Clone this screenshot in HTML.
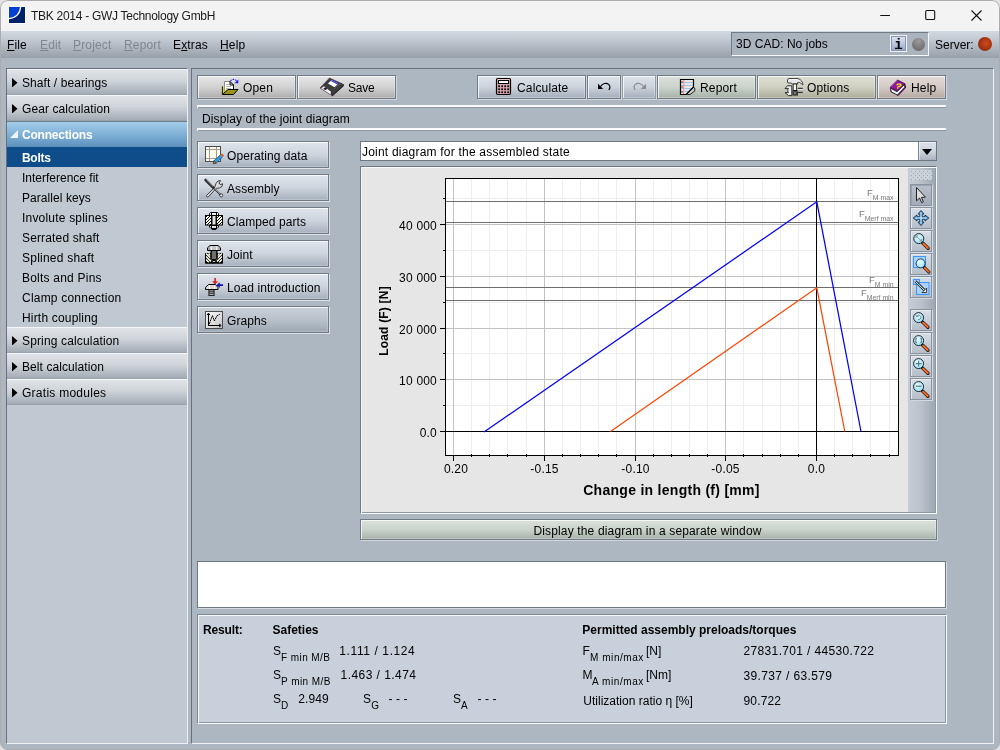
<!DOCTYPE html>
<html>
<head>
<meta charset="utf-8">
<title>TBK 2014 - GWJ Technology GmbH</title>
<style>
html,body{margin:0;padding:0;}
body{width:1000px;height:750px;overflow:hidden;background:#e2e2e2;font-family:"Liberation Sans",sans-serif;font-size:12px;color:#000;position:relative;}
.abs{position:absolute;}
#win{position:absolute;left:0;top:0;width:1000px;height:750px;border-radius:8px;background:#adb7c2;overflow:hidden;}
#winb{position:absolute;left:0;top:0;width:1000px;height:750px;border:1px solid #adadad;border-radius:8px;z-index:50;pointer-events:none;}
#win *{box-sizing:border-box;}
#win{will-change:transform;}
#title{position:absolute;left:0;top:0;width:1000px;height:31px;background:#f3f3f3;}
#title .t{position:absolute;left:31px;top:8px;font-size:12px;line-height:16px;color:#1a1a1a;white-space:nowrap;letter-spacing:-0.28px;}
#menubar{position:absolute;left:0;top:31px;width:1000px;height:27px;background:linear-gradient(#d3d9e0,#c3cad3 30%,#adb5bf 65%,#979fa9);}
.menu{position:absolute;top:6px;font-size:12px;letter-spacing:0.15px;line-height:16px;white-space:nowrap;}
.menu u{text-decoration:underline;text-underline-offset:1px;}
.menu.dis{color:#7f8790;}
/* sidebar */
#side{position:absolute;left:6px;top:68px;width:182px;height:676px;background:#c0c8d1;border-left:1px solid #66717d;border-top:1px solid #66717d;border-right:1px solid #eef1f4;border-bottom:1px solid #eef1f4;}
.hdr{position:absolute;left:0;width:180px;height:26px;background:linear-gradient(#dfe3e7,#cfd4da 45%,#a3abb5);border-top:1px solid #f4f6f8;border-bottom:1px solid #9ba4ae;font-size:12px;line-height:26px;padding-left:15px;white-space:nowrap;letter-spacing:0.08px;}
.hdr.sel{background:linear-gradient(#a5cde9,#7fb0d6 50%,#5c90bc);border-top:1px solid #6a808c;border-bottom:0;color:#fff;font-weight:bold;letter-spacing:-0.2px;}
.tri{position:absolute;left:5px;top:8px;width:5.5px;height:9.4px;background:#000;clip-path:polygon(0 0,100% 50%,0 100%);}
.tri2{position:absolute;left:3px;top:8px;width:0;height:0;border-bottom:8px solid #eef4fa;border-left:8px solid transparent;}
.it{position:absolute;left:0;width:180px;height:20px;font-size:12px;line-height:22px;padding-left:15px;white-space:nowrap;letter-spacing:0.06px;}
.it.sel{background:#0f4c8a;color:#fff;font-weight:bold;letter-spacing:-0.3px;}
/* main panel */
#main{position:absolute;left:191px;top:68px;width:803px;height:676px;background:#adb7c2;border-left:1px solid #66717d;border-top:1px solid #66717d;border-right:1px solid #eef1f4;border-bottom:1px solid #eef1f4;}
.btn{position:absolute;height:24px;border:1px solid #717b86;box-shadow:inset 1px 1px 0 rgba(255,255,255,.75),inset -1px -1px 0 rgba(255,255,255,.25),1px 1px 0 rgba(255,255,255,.45);font-size:12px;line-height:22px;white-space:nowrap;letter-spacing:0.15px;}
.g-gray{background:linear-gradient(#e6e6e6,#d2d2d2 50%,#adadad);}
.g-blue{background:linear-gradient(#dde3ea,#cbd3dc 50%,#a3afbc);}
.g-green{background:linear-gradient(#dbe1db,#cbd3cc 50%,#a6b2a8);}
.g-yel{background:linear-gradient(#dedfd3,#d0d1c2 50%,#abac99);}
.g-pink{background:linear-gradient(#e3dcd8,#d4cac5 50%,#b6a9a3);}
.btn.dis{border-color:#939da8;}
.btn span{position:absolute;top:1px;}
.sep{position:absolute;left:197px;width:749px;height:3px;border-left:1px solid #fafbfc;background:linear-gradient(#fafbfc,#fafbfc 2px,#8e98a3 2px);}
.sb{position:absolute;left:197px;width:132px;height:27px;border:1px solid #717b86;box-shadow:inset 1px 1px 0 rgba(255,255,255,.75),inset -1px -1px 0 rgba(255,255,255,.2),1px 1px 0 rgba(255,255,255,.6);background:linear-gradient(#e0e5ec,#cdd4dd 50%,#a6b1be);font-size:12px;line-height:25px;white-space:nowrap;letter-spacing:0.15px;}
.sb span{position:absolute;left:29px;top:2px;letter-spacing:0.08px;}
#combo{position:absolute;left:360px;top:141px;width:577px;height:20px;background:#fff;border:1px solid #6e7884;font-size:12px;line-height:18px;letter-spacing:0.21px;white-space:nowrap;}
#combo span{position:absolute;left:1px;top:1px;}
#combo i{position:absolute;right:0;top:0;width:18px;height:18px;background:linear-gradient(#dee3ea,#cdd4dc 50%,#a8b2be);border-left:1px solid #7a848f;box-shadow:inset 1px 1px 0 rgba(255,255,255,.5);}
#combo i:after{content:"";position:absolute;left:3px;top:7px;border-top:6px solid #000;border-left:5px solid transparent;border-right:5px solid transparent;}
#chart{position:absolute;left:360px;top:166px;width:577px;height:348px;background:#e6e6e6;border:1px solid #6e7884;border-right-color:#f8f9fa;border-bottom-color:#f8f9fa;box-shadow:inset 1px 1px 0 #f8f9fa,inset -1px -1px 0 #8e98a3;}
#ctb{position:absolute;left:908px;top:168px;width:27px;height:344px;background:linear-gradient(90deg,#c6cdd5,#b9c1ca 50%,#9da8b4);}
#sepwin{left:360px;top:519px;width:577px;height:21px;line-height:19px;text-align:center;}
#sepwin span{position:relative;top:2px;left:-1px;}
#msg{position:absolute;left:197px;top:561px;width:749px;height:47px;background:#fff;border:1px solid #6e7884;box-shadow:1px 1px 0 rgba(255,255,255,.5);}
#res{position:absolute;left:197px;top:614px;width:750px;height:110px;background:#c8d1db;border:1px solid #7d8793;border-right-color:#f8f9fa;border-bottom-color:#f8f9fa;box-shadow:inset 1px 1px 0 #f8f9fa,inset -1px -1px 0 #8e98a3;}
#cad{position:absolute;left:731px;top:1px;width:198px;height:24px;background:#aab4bf;border:1px solid #717b86;border-right-color:#f6f7f9;border-bottom-color:#f6f7f9;font-size:12px;line-height:16px;letter-spacing:0.15px;white-space:nowrap;}
#cad span{position:absolute;left:4px;top:3px;letter-spacing:0.03px;}
#cad b{position:absolute;left:158px;top:2px;width:17px;height:17px;padding-top:2px;border:1px solid #eef1f5;box-shadow:inset 0 0 0 1px #8a96ac;background:linear-gradient(#dfe6f4,#b3c1dc 60%,#8fa2c6);font-family:"Liberation Mono","DejaVu Sans Mono",monospace;font-weight:bold;font-size:14px;line-height:14px;text-align:center;color:#000;}
#cad em{position:absolute;left:180px;top:5px;width:13px;height:13px;border-radius:50%;background:radial-gradient(circle at 50% 25%,#9a9a9a,#727272 70%,#666);}
#srv{position:absolute;left:978px;top:6px;width:14px;height:14px;border-radius:50%;background:radial-gradient(circle at 58% 45%,#cf4a1c 0,#aa3613 45%,#882b10 80%,#742610);}
</style>
</head>
<body>
<div id="win">
  <div id="title">
    <svg class="abs" style="left:8px;top:6px" width="18" height="18" viewBox="-1 -1 18 18"><rect x="-1" y="-1" width="18" height="18" fill="#fdfdfd"/><rect width="16" height="16" fill="#00206c"/><path d="M0 0H11C10.6 6.2 6.2 10.6 0 11Z" fill="#0040d2"/><path d="M11.6 0C11.2 6.6 6.6 11.2 0 11.6" fill="none" stroke="#fff" stroke-width="1.3"/></svg>
    <div class="t">TBK 2014 - GWJ Technology GmbH</div>
    <svg class="abs" style="left:871px;top:0" width="128" height="30" viewBox="0 0 128 30"><g stroke="#111" stroke-width="1.1" fill="none"><path d="M9.2 15.5H19"/><rect x="54.7" y="10.5" width="9" height="9" rx="1.3"/><path d="M100.5 10.5L110.5 20.5M110.5 10.5L100.5 20.5"/></g></svg>
  </div>
  <div id="menubar">
    <div class="menu" style="left:7px"><u>F</u>ile</div>
    <div class="menu dis" style="left:40px"><u>E</u>dit</div>
    <div class="menu dis" style="left:73px"><u>P</u>roject</div>
    <div class="menu dis" style="left:124px"><u>R</u>eport</div>
    <div class="menu" style="left:173px">E<u>x</u>tras</div>
    <div class="menu" style="left:220px"><u>H</u>elp</div>
    <div id="cad"><span>3D CAD: No jobs</span><b>i</b><em></em></div>
    <div class="menu" style="left:935px;letter-spacing:0">Server:</div>
    <i id="srv"></i>
  </div>

  <div id="side">
    <div class="hdr" style="top:0"><i class="tri"></i>Shaft / bearings</div>
    <div class="hdr" style="top:26px"><i class="tri"></i>Gear calculation</div>
    <div class="hdr sel" style="top:52px"><i class="tri2"></i>Connections</div>
    <div class="it sel" style="top:78px">Bolts</div>
    <div class="it" style="top:98px;letter-spacing:0px">Interference fit</div>
    <div class="it" style="top:118px">Parallel keys</div>
    <div class="it" style="top:138px;letter-spacing:0.2px">Involute splines</div>
    <div class="it" style="top:158px;letter-spacing:0.15px">Serrated shaft</div>
    <div class="it" style="top:178px;letter-spacing:0.23px">Splined shaft</div>
    <div class="it" style="top:198px;letter-spacing:0.22px">Bolts and Pins</div>
    <div class="it" style="top:218px;letter-spacing:0.21px">Clamp connection</div>
    <div class="it" style="top:238px;letter-spacing:0.18px">Hirth coupling</div>
    <div class="hdr" style="top:258px;letter-spacing:0.15px"><i class="tri"></i>Spring calculation</div>
    <div class="hdr" style="top:284px"><i class="tri"></i>Belt calculation</div>
    <div class="hdr" style="top:310px;letter-spacing:0.26px"><i class="tri"></i>Gratis modules</div>
  </div>

  <div id="main"></div>
  <!-- toolbar -->
  <div class="btn g-gray" style="left:197px;top:75px;width:99px"><span style="left:45px">Open</span></div>
  <div class="btn g-gray" style="left:297px;top:75px;width:99px"><span style="left:50px;letter-spacing:-0.25px">Save</span></div>
  <div class="btn g-blue" style="left:477px;top:75px;width:109px"><span style="left:39px">Calculate</span></div>
  <div class="btn g-blue" style="left:587px;top:75px;width:34px"></div>
  <div class="btn g-blue dis" style="left:622px;top:75px;width:34px"></div>
  <div class="btn g-green" style="left:657px;top:75px;width:99px"><span style="left:42px">Report</span></div>
  <div class="btn g-yel" style="left:757px;top:75px;width:119px"><span style="left:49px">Options</span></div>
  <div class="btn g-pink" style="left:877px;top:75px;width:69px"><span style="left:33px">Help</span></div>
  <div class="sep" style="top:105px"></div>
  <div class="abs" style="left:202px;top:111px;font-size:12px;line-height:16px;letter-spacing:0.11px;white-space:nowrap">Display of the joint diagram</div>
  <div class="sep" style="top:128px"></div>
  <!-- side buttons -->
  <div class="sb" style="top:141px"><span>Operating data</span></div>
  <div class="sb" style="top:174px"><span>Assembly</span></div>
  <div class="sb" style="top:207px"><span>Clamped parts</span></div>
  <div class="sb" style="top:240px"><span>Joint</span></div>
  <div class="sb" style="top:273px"><span>Load introduction</span></div>
  <div class="sb" style="top:306px;background:linear-gradient(#c9d0d9,#b9c2cc 50%,#9da8b4)"><span>Graphs</span></div>
  <!-- combo -->
  <div id="combo"><span>Joint diagram for the assembled state</span><i></i></div>
  <!-- chart panel -->
  <div id="chart"></div>
  <svg id="chartsvg" class="abs" style="left:360px;top:167px" width="548" height="344" viewBox="360 167 548 344" font-family="Liberation Sans, sans-serif">
<rect x="445.5" y="178.5" width="453.0" height="277.0" fill="#fff"/>
<path d="M471.5 178.5V455.5M489.5 178.5V455.5M507.5 178.5V455.5M526.5 178.5V455.5M562.5 178.5V455.5M580.5 178.5V455.5M598.5 178.5V455.5M616.5 178.5V455.5M653.5 178.5V455.5M671.5 178.5V455.5M689.5 178.5V455.5M707.5 178.5V455.5M743.5 178.5V455.5M762.5 178.5V455.5M780.5 178.5V455.5M798.5 178.5V455.5M834.5 178.5V455.5M852.5 178.5V455.5M870.5 178.5V455.5M889.5 178.5V455.5M445.5 405.5H898.5M445.5 353.5H898.5M445.5 302.5H898.5M445.5 250.5H898.5M445.5 198.5H898.5" stroke="#eeeeee" stroke-width="1" fill="none" shape-rendering="crispEdges"/>
<path d="M453.5 178.5V455.5M544.5 178.5V455.5M635.5 178.5V455.5M725.5 178.5V455.5M816.5 178.5V455.5M445.5 431.5H898.5M445.5 379.5H898.5M445.5 328.5H898.5M445.5 276.5H898.5M445.5 224.5H898.5" stroke="#c2c2c2" stroke-width="1" fill="none" shape-rendering="crispEdges"/>
<path d="M445.5 201.5H898.5M445.5 222.5H898.5M445.5 287.5H898.5M445.5 300.5H898.5" stroke="#6e6e6e" stroke-width="1" fill="none" shape-rendering="crispEdges"/>
<path d="M445.5 431.5H898.5M816.5 178.5V455.5" stroke="#000" stroke-width="1" fill="none" shape-rendering="crispEdges"/>
<path d="M484 432L816.8 201.8L861 431.5" stroke="#0000ff" stroke-width="1.25" fill="none"/>
<path d="M610.5 431.5L816.8 287.8L844.8 431.5" stroke="#ff4500" stroke-width="1.25" fill="none"/>
<rect x="445.5" y="178.5" width="453.0" height="277.0" fill="none" stroke="#000" stroke-width="1" shape-rendering="crispEdges"/>
<path d="M453.5 455.5V460.5M471.5 454.0V457.0M489.5 454.0V457.0M507.5 454.0V457.0M526.5 454.0V457.0M544.5 455.5V460.5M562.5 454.0V457.0M580.5 454.0V457.0M598.5 454.0V457.0M616.5 454.0V457.0M635.5 455.5V460.5M653.5 454.0V457.0M671.5 454.0V457.0M689.5 454.0V457.0M707.5 454.0V457.0M725.5 455.5V460.5M743.5 454.0V457.0M762.5 454.0V457.0M780.5 454.0V457.0M798.5 454.0V457.0M816.5 455.5V460.5M834.5 454.0V457.0M852.5 454.0V457.0M870.5 454.0V457.0M889.5 454.0V457.0M439.5 431.5H445.5M442.5 405.5H445.5M439.5 379.5H445.5M442.5 353.5H445.5M439.5 328.5H445.5M442.5 302.5H445.5M439.5 276.5H445.5M442.5 250.5H445.5M439.5 224.5H445.5M442.5 198.5H445.5" stroke="#000" stroke-width="1" fill="none" shape-rendering="crispEdges"/>
<g font-size="12" fill="#000" letter-spacing="0.2">
<text x="437" y="436.5" text-anchor="end">0.0</text>
<text x="437" y="384.5" text-anchor="end">10 000</text>
<text x="437" y="333.5" text-anchor="end">20 000</text>
<text x="437" y="281.5" text-anchor="end">30 000</text>
<text x="437" y="229.5" text-anchor="end">40 000</text>
<text x="456.0" y="473" text-anchor="middle">0.20</text>
<text x="544.5" y="473" text-anchor="middle">-0.15</text>
<text x="635.5" y="473" text-anchor="middle">-0.10</text>
<text x="725.5" y="473" text-anchor="middle">-0.05</text>
<text x="816.5" y="473" text-anchor="middle">0.0</text>
</g>
<text x="671.5" y="495" text-anchor="middle" font-size="14" font-weight="bold" letter-spacing="0.28">Change in length (f) [mm]</text>
<text transform="translate(387.5 321) rotate(-90)" text-anchor="middle" font-size="12" font-weight="bold" letter-spacing="0.2">Load (F) [N]</text>
<text x="893.5" y="196" text-anchor="end" fill="#7a7a7a" font-size="9.5">F<tspan font-size="6.9" dy="3.5">M max</tspan></text>
<text x="893.5" y="217" text-anchor="end" fill="#7a7a7a" font-size="9.5">F<tspan font-size="6.9" dy="3.5">Merf max</tspan></text>
<text x="893.5" y="283" text-anchor="end" fill="#7a7a7a" font-size="9.5">F<tspan font-size="6.9" dy="3.5">M min</tspan></text>
<text x="893.5" y="296" text-anchor="end" fill="#7a7a7a" font-size="9.5">F<tspan font-size="6.9" dy="3.5">Merf min</tspan></text>
</svg>
  <div id="ctb"></div>
  <div class="btn g-green" id="sepwin"><span>Display the diagram in a separate window</span></div>
  <div id="msg"></div>
  <div id="res"></div>
<svg id="icons" class="abs" style="left:0;top:0;z-index:5" width="1000" height="750" viewBox="0 0 1000 750">
<!-- Open icon -->
<g>
  <path d="M224.5 81.5H230L233.5 85V92H224.5Z" fill="#fff" stroke="#8a8a8a" stroke-width="1"/>
  <path d="M230 81.5V85H233.5" fill="none" stroke="#000" stroke-width="1"/><path d="M230 81.5L233.5 85V89.5" fill="none" stroke="#000" stroke-width="1"/>
  <path d="M226 84.5H229M226 86.5H231M226 88.5H231" stroke="#b8b8b8" stroke-width="1"/>
  <path d="M222.5 86.5V94.5" stroke="#000" stroke-width="1.2"/>
  <path d="M223.5 86.5V93.5L227 89.5" stroke="#d8d040" stroke-width="1.4" fill="none"/>
  <path d="M222.5 94.5L228 89.5H238L233.5 94.5Z" fill="#9a9418" stroke="#000" stroke-width="1"/>
  <path d="M230.5 81C232 78.8 235 78.8 237 81.5" fill="none" stroke="#2020e0" stroke-width="1.1" stroke-dasharray="1.6 1"/>
  <path d="M238.3 79.5V83.3H234.5Z" fill="#1818f0"/>
</g>
<!-- Save icon -->
<g>
  <path d="M329.5 78L343.8 84.6L332 95.6L320 88Z" fill="#3c3c3c" stroke="#4a2050" stroke-width="0.6"/>
  <path d="M332 95.6L343.8 84.6L343.8 86L332.2 96.4Z" fill="#111"/>
  <path d="M328 83.6L331.6 80L338.2 83.6L334.6 87.2Z" fill="#fff"/>
  <path d="M331.6 80L338.2 83.6L337.4 84.6L330.8 81Z" fill="#3a3aff"/>
  <path d="M321 88.3L324 86.2L331 91.8L330.6 94.6Z" fill="#ededed"/>
  <path d="M323.3 88.6L325.6 87.3L327.4 88.8L325.2 90.2Z" fill="#222"/>
  <path d="M334.5 88.5L340 83.8" stroke="#888" stroke-width="0.8" stroke-dasharray="0.8 0.8"/>
</g>
<!-- Calculate icon -->
<g>
  <rect x="496.5" y="78.5" width="14" height="16" rx="1.2" fill="#d4a4ac" stroke="#000" stroke-width="1.2"/>
  <rect x="497.3" y="79.3" width="12.4" height="1" fill="#f0d4d8"/>
  <rect x="498.5" y="80.5" width="10" height="3" fill="#fff" stroke="#000" stroke-width="1"/>
  <g fill="#000">
    <rect x="498.3" y="85.4" width="1.7" height="1.7"/><rect x="501.3" y="85.4" width="1.7" height="1.7"/><rect x="504.3" y="85.4" width="1.7" height="1.7"/><rect x="507.3" y="85.4" width="1.7" height="1.7"/>
    <rect x="498.3" y="88.4" width="1.7" height="1.7"/><rect x="501.3" y="88.4" width="1.7" height="1.7"/><rect x="504.3" y="88.4" width="1.7" height="1.7"/><rect x="507.3" y="88.4" width="1.7" height="1.7"/>
    <rect x="498.3" y="91.4" width="1.7" height="1.7"/><rect x="501.3" y="91.4" width="1.7" height="1.7"/><rect x="504.3" y="91.4" width="1.7" height="1.7"/><rect x="507.3" y="91.4" width="1.7" height="1.7"/>
  </g>
</g>
<!-- Undo / Redo -->
<path d="M598 83.8V89H603.2Z" fill="#000"/>
<path d="M600.5 86.5C602.5 83.2 606.5 82.4 608.6 84.4C610.4 86.2 610 88.4 608.8 90" fill="none" stroke="#000" stroke-width="1.2"/>
<path d="M646 83.8V89H640.8Z" fill="#8c8c8c"/>
<path d="M643.5 86.5C641.5 83.2 637.5 82.4 635.4 84.4C633.6 86.2 634 88.4 635.2 90" fill="none" stroke="#8c8c8c" stroke-width="1.2"/>
<!-- Report icon -->
<g>
  <path d="M680.5 79.5H693.5V87L686 94.5H680.5Z" fill="#f0e6e6" stroke="none"/>
  <path d="M684.5 82.5H693M684.5 85.5H693M684.5 88.5H691.5M684.5 91.5H688.5M681 82.5H683M681 85.5H683M681 88.5H683M681 91.5H683" stroke="#90c8f0" stroke-width="1.2"/>
  <path d="M683.7 80V94" stroke="#ff8a8a" stroke-width="1.2"/>
  <path d="M686.5 94.5L693.5 87.5L694.8 88.2V91L690 94.5Z" fill="#c8c8c8" stroke="#000" stroke-width="0.8"/>
  <path d="M680.5 79.5H693.5V87L686 94.5H680.5Z" fill="none" stroke="#000" stroke-width="1.2"/>
  <circle cx="682" cy="82" r="0.7" fill="#222"/><circle cx="682" cy="87" r="0.7" fill="#222"/><circle cx="682" cy="92" r="0.7" fill="#222"/>
</g>
<!-- Options icon -->
<g>
  <path d="M787.5 79.5L789 78.5H798C801 79.5 802.8 82 803 85L801.5 84C800.5 82.5 799 82 797.5 82.5V84H792.5L791 83H788L787.5 82Z" fill="#e9e9e9" stroke="#333" stroke-width="0.9"/>
  <path d="M789 79.5H797" stroke="#fff" stroke-width="1"/>
  <rect x="793.2" y="84" width="3.4" height="6.5" fill="#f4f4f4" stroke="#222" stroke-width="0.9"/>
  <rect x="792.5" y="90.3" width="5.3" height="5.2" fill="#111"/>
  <path d="M793.5 91.5h1v1h-1zM795.5 91.5h1v1h-1zM794.5 92.5h1v1h-1zM793.5 93.5h1v1h-1zM795.5 93.5h1v1h-1z" fill="#ddd"/>
  <path d="M785 88.6L787.4 85.8H791.8V95.6H788.6L785 92.6H788.4C787.6 91.4 787.6 89.8 788.4 88.6Z" fill="#ececec" stroke="#1c1c1c" stroke-width="0.9" stroke-linejoin="round"/>
  <rect x="797.8" y="88.3" width="5" height="3.8" fill="#e8e8e8"/>
  <path d="M797.8 88.3H802.8M797.8 92.3H802.8" stroke="#111" stroke-width="1"/>
  <path d="M797.8 91H802.8" stroke="#888" stroke-width="1"/>
</g>
<!-- Help icon -->
<g>
  <path d="M890.4 88L897 91.6L904.8 84.2L905.4 87.6L898 95.4L891 91.8Z" fill="#eee" stroke="#111" stroke-width="0.9"/>
  <path d="M897.6 80L904.7 83.6L897.3 90.9L890.1 87.3Z" fill="#9412a4" stroke="#2a0a30" stroke-width="0.7"/>
  <path d="M890.1 87.3L890.5 91.5L891.4 91.9L891 88Z" fill="#8a10a0"/>
  <path d="M904.7 83.6L905.6 87.7L898 95.6L897.6 94.6L904.6 87.3Z" fill="#8a10a0" stroke="#111" stroke-width="0.5"/>
  <path d="M891 86.6L897 80.6" stroke="#d8b8e0" stroke-width="0.8" stroke-dasharray="0.7 0.7"/>
  <path d="M896.6 85.2L897.8 84.1L900.6 84.1L901 85.4L899.2 86.6L897.6 86.6M897 88.2L898.2 87.8" stroke="#f2ee10" stroke-width="1.3" fill="none"/>
</g>
<!-- Operating data icon -->
<g>
  <rect x="205.5" y="146.5" width="15" height="15" fill="#ffffea" stroke="#4c4c4c" stroke-width="1"/>
  <path d="M209.5 147V161M216.5 147V161M206 149.5H220M206 158.5H220" stroke="#a8989e" stroke-width="1"/>
  <path d="M213.6 163.4L214 160.6L220.6 154.6L223 156.6L216.4 163Z" fill="#2a98e6" stroke="#123" stroke-width="0.5"/>
  <path d="M213.2 163.8L213.8 160.8L216.2 163.2Z" fill="#ff8a10" stroke="#111" stroke-width="0.5"/>
  <path d="M220.2 155L221.2 154.2L223.4 156.2L222.6 157.2Z" fill="#ff7a10"/>
  <path d="M221.2 154.2L221.8 153.8L223.8 155.6L223.4 156.2Z" fill="#b01010"/>
</g>
<!-- Assembly icon -->
<g>
  <path d="M206.5 195.5L214.5 187.6L216 183.5L218 181L220.5 180.6L219 183L220.2 184.6L222.6 183.8L222 186.4L219.4 188L216.4 188.2L208.6 196.6C207.4 197.4 206 196.6 206.5 195.5Z" fill="#dcdcdc" stroke="#2a2a2a" stroke-width="0.9"/>
  <path d="M205.6 180L213.4 187.8" stroke="#2c2c2c" stroke-width="2.6" stroke-linecap="round"/>
  <path d="M206.2 179.6L213 186.4" stroke="#cfcfcf" stroke-width="0.7"/>
  <path d="M213.4 187.8L220.4 194.6" stroke="#222" stroke-width="1.6"/>
  <path d="M214 188.2L220.4 194.4" stroke="#f4f4f4" stroke-width="0.6"/>
  <circle cx="221.2" cy="195.4" r="1.5" fill="#eee" stroke="#222" stroke-width="0.8"/>
</g>
<!-- Clamped parts icon -->
<defs>
  <pattern id="hat" width="3" height="3" patternUnits="userSpaceOnUse"><rect width="3" height="3" fill="#fffff0"/><path d="M-1 1L1 -1M0 3L3 0M2 4L4 2" stroke="#000" stroke-width="1"/></pattern>
  <pattern id="xhat" width="3" height="3" patternUnits="userSpaceOnUse"><rect width="3" height="3" fill="#ffffe6"/><path d="M0 0L3 3M3 0L0 3" stroke="#000" stroke-width="0.8"/></pattern>
</defs>
<g>
  <path d="M210.5 212.5H217.5L218.5 213.5V215.5H209.5V213.5Z" fill="#eee" stroke="#000" stroke-width="1"/>
  <path d="M211.5 213V215M216.5 213V215" stroke="#000" stroke-width="1"/>
  <rect x="205" y="215" width="18" height="10.5" fill="#000"/>
  <rect x="206" y="216" width="5" height="8.5" fill="url(#hat)"/>
  <rect x="217" y="216" width="5" height="8.5" fill="url(#hat)"/>
  <rect x="212.5" y="216" width="3" height="8.5" fill="#e4e4e4"/>
  <path d="M209.5 225.5H218.5V227L217 228.5H211L209.5 227Z" fill="#e2e2e2" stroke="#000" stroke-width="1"/>
  <path d="M211.5 225.5V228M216.5 225.5V228" stroke="#000" stroke-width="1"/>
  <path d="M212 228.5H216V229.5H212Z" fill="#ddd" stroke="#000" stroke-width="1"/>
</g>
<!-- Joint icon -->
<g>
  <rect x="205" y="253" width="18" height="10.5" fill="#000"/>
  <g stroke="#fffde8" stroke-width="1.5">
    <path d="M206 256.5L211 261.5M206 253.5L214 261.5M206 259.5L209 262.5M208.5 253.5L211 256"/>
    <path d="M222 256.5L217 261.5M222 253.5L214 261.5M222 259.5L219 262.5M219.5 253.5L217 256"/>
  </g>
  <path d="M205.5 253.5V263H222.5V253.5" fill="none" stroke="#000" stroke-width="1"/>
  <path d="M210.5 253V258.5L212.5 261H215.5L217.5 258.5V253Z" fill="#000"/>
  <path d="M210 245.5H218L220.5 247.8V250.5H207.5V247.8Z" fill="#c4c4c4" stroke="#000" stroke-width="1"/>
  <path d="M211.5 246.5V250M216.5 246.5V250" stroke="#f6f6f6" stroke-width="1.2"/>
  <path d="M209 248V250M219 248V250" stroke="#8a8a8a" stroke-width="1"/>
  <rect x="210.5" y="250.5" width="7" height="8.5" fill="#000"/>
  <path d="M211.8 252H216.2M211.8 254H216.2M211.8 256H216.2M211.8 258H216.2" stroke="#e0e0e0" stroke-width="1"/>
</g>
<!-- Load introduction icon -->
<g>
  <path d="M214.3 278H215.9V281.2H218L215.1 284.4L212.2 281.2H214.3Z" fill="#d42020"/>
  <path d="M223 284.3V285.9H219.8V288L216.6 285.1L219.8 282.2V284.3Z" fill="#1010c8"/>
  <path d="M208.5 284.5H215.5L218 287.5V289.5H205.5V287.5Z" fill="#d8d8d8" stroke="#000" stroke-width="1"/>
  <path d="M209.5 285.5V289M214.5 285.5V289" stroke="#fff" stroke-width="1"/>
  <rect x="208.5" y="290" width="6" height="6" fill="#000"/>
  <path d="M209.3 290.9H213.7M209.3 292.9H213.7M209.3 294.7H213.7" stroke="#eee" stroke-width="0.9"/>
</g>
<!-- Graphs icon -->
<defs><linearGradient id="gg" x1="0" y1="0" x2="1" y2="1"><stop offset="0" stop-color="#fff"/><stop offset="1" stop-color="#c4c4c4"/></linearGradient></defs>
<g>
  <rect x="205.5" y="311.5" width="17" height="17" fill="url(#gg)" stroke="#4a4a4a" stroke-width="1"/>
  <path d="M208.5 314V325.5H220" stroke="#000" stroke-width="1.1" fill="none"/>
  <path d="M207 315.2L208.5 313L210 315.2M219 324L221.2 325.5L219 327" stroke="#000" stroke-width="1" fill="none"/>
  <path d="M209.2 324L212.4 315.6L214.4 321L216.8 316L219.8 314.2" stroke="#000" stroke-width="1" fill="none" stroke-dasharray="2.2 0.6"/>
</g>
<!-- chart toolbar -->
<defs>
  <pattern id="grip" x="910" y="170" width="4" height="4" patternUnits="userSpaceOnUse"><rect width="4" height="4" fill="#ccd2d9"/><rect x="1" y="1" width="1" height="1" fill="#9ea8b3"/><rect x="3" y="3" width="1" height="1" fill="#9ea8b3"/></pattern>
  <linearGradient id="tb1" x1="0" y1="0" x2="0" y2="1"><stop offset="0" stop-color="#d9dfe7"/><stop offset="1" stop-color="#b4bdc8"/></linearGradient>
  <linearGradient id="tb0" x1="0" y1="0" x2="0" y2="1"><stop offset="0" stop-color="#b9c1cb"/><stop offset="1" stop-color="#a1acb8"/></linearGradient>
  <radialGradient id="lens" cx="0.4" cy="0.35" r="0.7"><stop offset="0" stop-color="#e4fbff"/><stop offset="1" stop-color="#9adff4"/></radialGradient>
  <g id="mag"><path d="M4 4.5L9.3 9.6" stroke="#1a1a1a" stroke-width="3.4" stroke-linecap="round"/><path d="M4.6 5.1L9.1 9.4" stroke="#ff6a1c" stroke-width="2" stroke-linecap="round"/><circle cx="0" cy="0" r="5" fill="url(#lens)" stroke="#1e2a30" stroke-width="1"/></g>
</defs>
<rect x="910" y="170" width="22" height="10" fill="url(#grip)"/>
<g stroke-width="1" shape-rendering="crispEdges">
<rect x="910.5" y="184.5" width="21" height="21" fill="url(#tb0)" stroke="#8a949f"/>
<path d="M911.5 204.5V185.5H930.5" fill="none" stroke="#99a3ae"/>
<path d="M911 206.5H932.5V185" fill="none" stroke="#d3d9e0"/>
<rect x="910.5" y="207.5" width="21" height="21" fill="url(#tb1)" stroke="#8a949f"/>
<path d="M911.5 227.5V208.5H930.5" fill="none" stroke="#e6eaef"/>
<path d="M911 229.5H932.5V208" fill="none" stroke="#d3d9e0"/>
<rect x="910.5" y="230.5" width="21" height="21" fill="url(#tb1)" stroke="#8a949f"/>
<path d="M911.5 250.5V231.5H930.5" fill="none" stroke="#e6eaef"/>
<path d="M911 252.5H932.5V231" fill="none" stroke="#d3d9e0"/>
<rect x="910.5" y="253.5" width="21" height="21" fill="url(#tb1)" stroke="#8a949f"/>
<path d="M911.5 273.5V254.5H930.5" fill="none" stroke="#e6eaef"/>
<path d="M911 275.5H932.5V254" fill="none" stroke="#d3d9e0"/>
<rect x="910.5" y="276.5" width="21" height="21" fill="url(#tb1)" stroke="#8a949f"/>
<path d="M911.5 296.5V277.5H930.5" fill="none" stroke="#e6eaef"/>
<path d="M911 298.5H932.5V277" fill="none" stroke="#d3d9e0"/>
<rect x="910.5" y="309.5" width="21" height="21" fill="url(#tb1)" stroke="#8a949f"/>
<path d="M911.5 329.5V310.5H930.5" fill="none" stroke="#e6eaef"/>
<path d="M911 331.5H932.5V310" fill="none" stroke="#d3d9e0"/>
<rect x="910.5" y="332.5" width="21" height="21" fill="url(#tb1)" stroke="#8a949f"/>
<path d="M911.5 352.5V333.5H930.5" fill="none" stroke="#e6eaef"/>
<path d="M911 354.5H932.5V333" fill="none" stroke="#d3d9e0"/>
<rect x="910.5" y="355.5" width="21" height="21" fill="url(#tb1)" stroke="#8a949f"/>
<path d="M911.5 375.5V356.5H930.5" fill="none" stroke="#e6eaef"/>
<path d="M911 377.5H932.5V356" fill="none" stroke="#d3d9e0"/>
<rect x="910.5" y="378.5" width="21" height="21" fill="url(#tb1)" stroke="#8a949f"/>
<path d="M911.5 398.5V379.5H930.5" fill="none" stroke="#e6eaef"/>
<path d="M911 400.5H932.5V379" fill="none" stroke="#d3d9e0"/>
</g>
<!-- pointer -->
<path d="M916.5 187.5V200.8L919.6 198L921.6 202.6L923.4 201.8L921.4 197.4L925.4 197.2Z" fill="#dedede" stroke="#222" stroke-width="1" stroke-linejoin="round"/>
<!-- move -->
<path d="M921 210.5L924 214H922.2V216.8H925V215L928.8 218L925 221V219.2H922.2V222H924L921 225.6L918 222H919.8V219.2H917V221L913.2 218L917 215V216.8H919.8V214H918Z" fill="#58aef4" stroke="#1a2a3a" stroke-width="0.9" stroke-linejoin="round"/><path d="M921 212.5V223.5M915.5 218H926.5" stroke="#cfe8ff" stroke-width="1" fill="none"/>
<!-- zoom icons -->
<use href="#mag" x="918.8" y="238.6"/>
<path d="M916 236L921.6 241.2M916 238.2V236H918.2M921.6 239V241.2H919.4" stroke="#7f9098" stroke-width="0.9" fill="none"/>
<rect x="913.5" y="256.5" width="12" height="11" fill="#a9d2ff" stroke="#3d96ff" stroke-width="1"/>
<g transform="translate(920.6 263.4) scale(0.9)"><use href="#mag"/></g>
<rect x="913.5" y="279.5" width="6" height="5" fill="#a9d2ff" stroke="#3d96ff" stroke-width="1"/>
<rect x="916.5" y="282.5" width="12.5" height="12" fill="#a9d2ff" stroke="#3d96ff" stroke-width="1"/>
<path d="M915.4 281.2L924.4 290.2" stroke="#222" stroke-width="2.6"/>
<path d="M915.4 281.2L924.4 290.2" stroke="#fff" stroke-width="1"/>
<path d="M926.6 292.6V288L922 292.6Z" fill="#fff" stroke="#222" stroke-width="0.9"/>
<use href="#mag" x="918.6" y="317.6"/>
<path d="M916.6 316.4C917.4 314.6 920 314.6 920.8 316.6C921.4 318.6 919.6 320.2 917.8 319.6M916 314.6L916.4 316.8L918.6 316.4" stroke="#6f8890" stroke-width="0.9" fill="none"/>
<use href="#mag" x="918.6" y="340.6"/>
<path d="M917 338.4H915.8V342.8H917M920.2 338.4H921.4V342.8H920.2" stroke="#5f7880" stroke-width="1" fill="none"/>
<use href="#mag" x="918.6" y="363.6"/>
<path d="M915.8 363.6H921.4M918.6 360.8V366.4" stroke="#5f7880" stroke-width="1.1" fill="none"/>
<use href="#mag" x="918.6" y="386.6"/>
<path d="M915.8 386.2H921.4" stroke="#5f7880" stroke-width="1.2" fill="none"/>
<!-- results text -->
<g font-family="Liberation Sans, sans-serif" font-size="12" fill="#000">
  <text x="203" y="634" font-weight="bold" letter-spacing="-0.15">Result:</text>
  <text x="272.5" y="634" font-weight="bold">Safeties</text>
  <text x="273" y="655">S</text><text x="281" y="661" font-size="10" textLength="49">F min M/B</text>
  <text x="339.3" y="655" textLength="75.5">1.111 / 1.124</text>
  <text x="273" y="679">S</text><text x="281" y="685" font-size="10" textLength="49.5">P min M/B</text>
  <text x="340.5" y="679" textLength="75.5">1.463 / 1.474</text>
  <text x="273" y="703">S</text><text x="281" y="709" font-size="10">D</text>
  <text x="298.3" y="703" textLength="30.5">2.949</text>
  <text x="363" y="703">S</text><text x="371.3" y="709" font-size="10">G</text>
  <text x="388.5" y="703" textLength="19">- - -</text>
  <text x="453" y="703">S</text><text x="461" y="709" font-size="10">A</text>
  <text x="477.5" y="703" textLength="19">- - -</text>
  <text x="582.3" y="634" font-weight="bold">Permitted assembly preloads/torques</text>
  <text x="582.5" y="655">F</text><text x="590" y="661" font-size="10" textLength="53.3">M min/max</text><text x="646" y="655">[N]</text>
  <text x="743.5" y="655" textLength="130.5">27831.701 / 44530.722</text>
  <text x="582.5" y="679">M</text><text x="592" y="685" font-size="10" textLength="51.3">A min/max</text><text x="646" y="679">[Nm]</text>
  <text x="743.5" y="680" textLength="88.5">39.737 / 63.579</text>
  <text x="583.3" y="705" textLength="109.5">Utilization ratio η [%]</text>
  <text x="743.5" y="705" textLength="37.5">90.722</text>
</g>
</svg>

  <div id="winb"></div>
</div>
</body>
</html>
